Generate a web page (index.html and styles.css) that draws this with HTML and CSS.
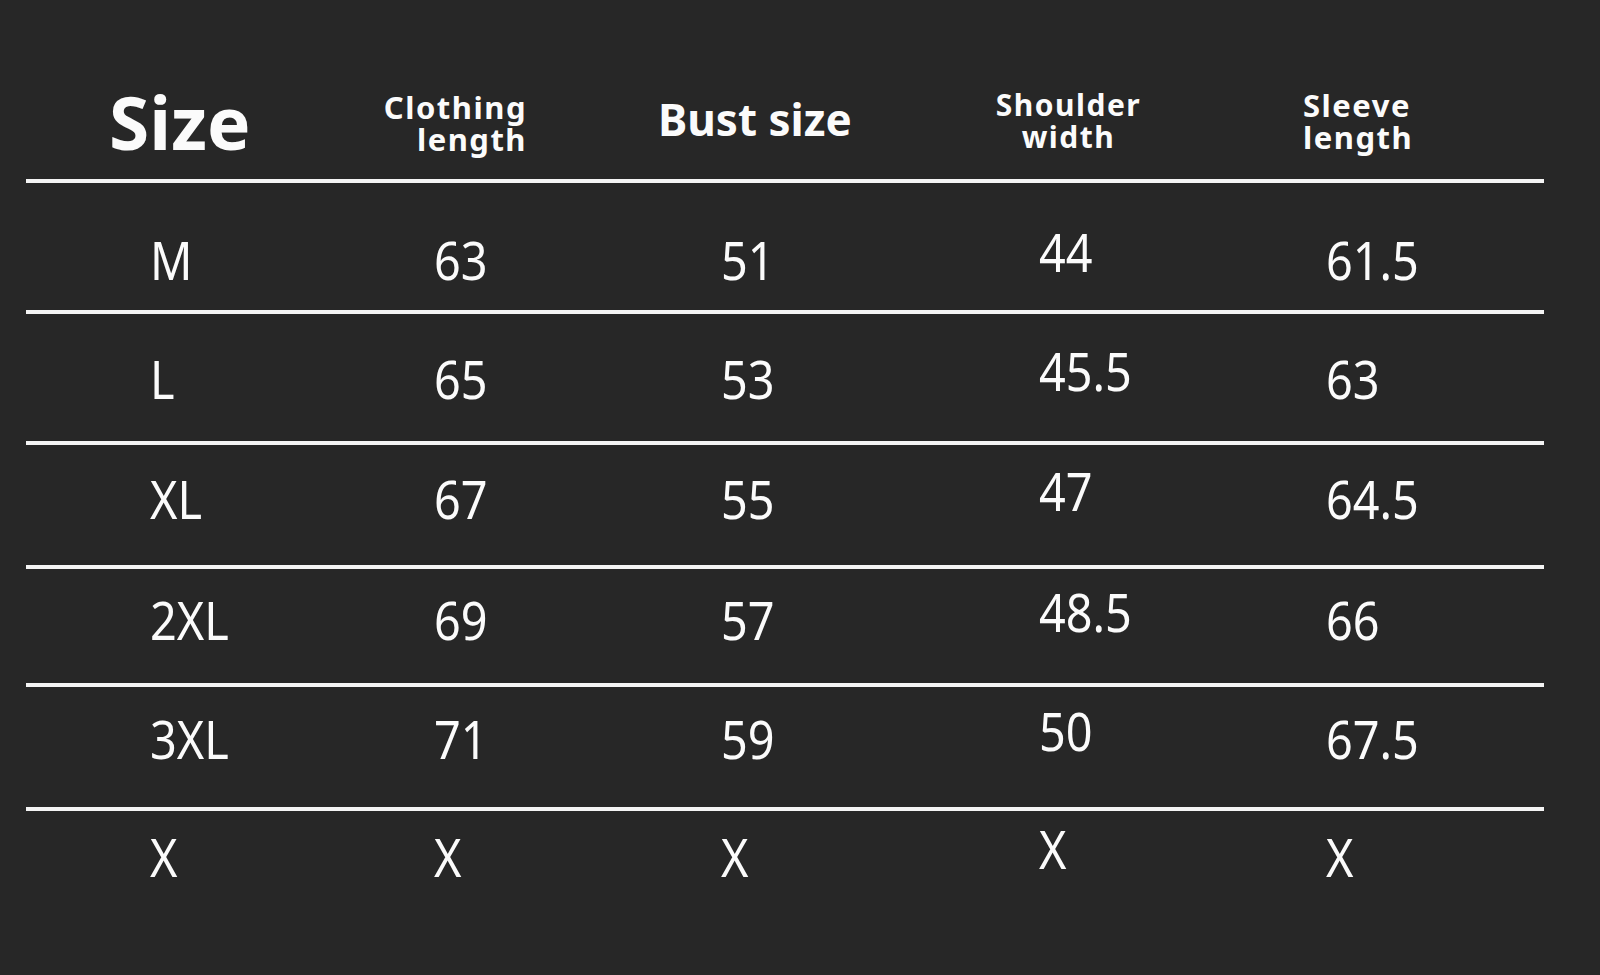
FILE: index.html
```html
<!DOCTYPE html>
<html lang="en">
<head>
<meta charset="utf-8">
<title>Size chart</title>
<link rel="stylesheet" href="styles.css">
</head>
<body>
<main class="chart">
  <div class="head">
    <div class="h h-size">Size</div>
    <div class="h h-small h-cloth">Clothing<br>length</div>
    <div class="h h-bust">Bust size</div>
    <div class="h h-small h-shoulder">Shoulder<br>width</div>
    <div class="h h-small h-sleeve">Sleeve<br>length</div>
  </div>

  <div class="row r1">
    <div class="c"><span>M</span></div>
    <div class="c"><span>63</span></div>
    <div class="c"><span>51</span></div>
    <div class="c c-sh"><span>44</span></div>
    <div class="c"><span>61.5</span></div>
  </div>
  <div class="row r2">
    <div class="c"><span>L</span></div>
    <div class="c"><span>65</span></div>
    <div class="c"><span>53</span></div>
    <div class="c c-sh"><span>45.5</span></div>
    <div class="c"><span>63</span></div>
  </div>
  <div class="row r3">
    <div class="c"><span>XL</span></div>
    <div class="c"><span>67</span></div>
    <div class="c"><span>55</span></div>
    <div class="c c-sh"><span>47</span></div>
    <div class="c"><span>64.5</span></div>
  </div>
  <div class="row r4">
    <div class="c"><span>2XL</span></div>
    <div class="c"><span>69</span></div>
    <div class="c"><span>57</span></div>
    <div class="c c-sh"><span>48.5</span></div>
    <div class="c"><span>66</span></div>
  </div>
  <div class="row r5">
    <div class="c"><span>3XL</span></div>
    <div class="c"><span>71</span></div>
    <div class="c"><span>59</span></div>
    <div class="c c-sh"><span>50</span></div>
    <div class="c"><span>67.5</span></div>
  </div>
  <div class="row r6">
    <div class="c"><span>X</span></div>
    <div class="c"><span>X</span></div>
    <div class="c"><span>X</span></div>
    <div class="c c-sh"><span>X</span></div>
    <div class="c"><span>X</span></div>
  </div>
</main>
</body>
</html>
```

FILE: styles.css
```css
html, body {
  margin: 0;
  padding: 0;
  background: #272727;
}

body {
  width: 1600px;
  height: 975px;
  overflow: hidden;
  color: #fbfbfb;
  font-family: "Noto Sans", "Open Sans", "DejaVu Sans", sans-serif;
}

.chart {
  margin-left: 26px;
  width: 1518px;
}

.head,
.row {
  display: grid;
  grid-template-columns: 284px 287px 316px 289px 1fr;
  align-items: start;
}

.head {
  height: 179px;
  border-bottom: 4px solid #f4f4f4;
}

.h {
  font-weight: 700;
  white-space: nowrap;
}

.h-size {
  font-size: 73px;
  line-height: 73px;
  margin-top: 85px;
  padding-left: 83px;
}

.h-small {
  font-size: 31px;
  line-height: 32px;
  letter-spacing: 1.5px;
}

.h-cloth {
  margin-top: 91px;
  text-align: right;
  padding-right: 70px;
}

.h-bust {
  font-size: 44px;
  line-height: 44px;
  margin-top: 97px;
  padding-left: 61px;
}

.h-shoulder {
  margin-top: 89px;
  text-align: center;
  padding-left: 22px;
  font-size: 30px;
}

.h-sleeve {
  margin-top: 89px;
  padding-left: 101px;
}

.row {
  border-bottom: 4px solid #f4f4f4;
}

.row.r6 {
  border-bottom: none;
}

.c {
  font-size: 52px;
  line-height: 52px;
  font-weight: 400;
  padding-left: 124px;
  white-space: nowrap;
}

.c span {
  display: inline-block;
  transform: scaleX(0.9);
  transform-origin: left center;
}

.c-sh {
  padding-left: 126px;
  margin-top: -8px;
}

.r1 { padding-top: 51px; padding-bottom: 24px; }
.r2 { padding-top: 39px; padding-bottom: 36px; }
.r3 { padding-top: 28px; padding-bottom: 40px; }
.r4 { padding-top: 25px; padding-bottom: 37px; }
.r5 { padding-top: 26px; padding-bottom: 42px; }
.r6 { padding-top: 20px; }
```
